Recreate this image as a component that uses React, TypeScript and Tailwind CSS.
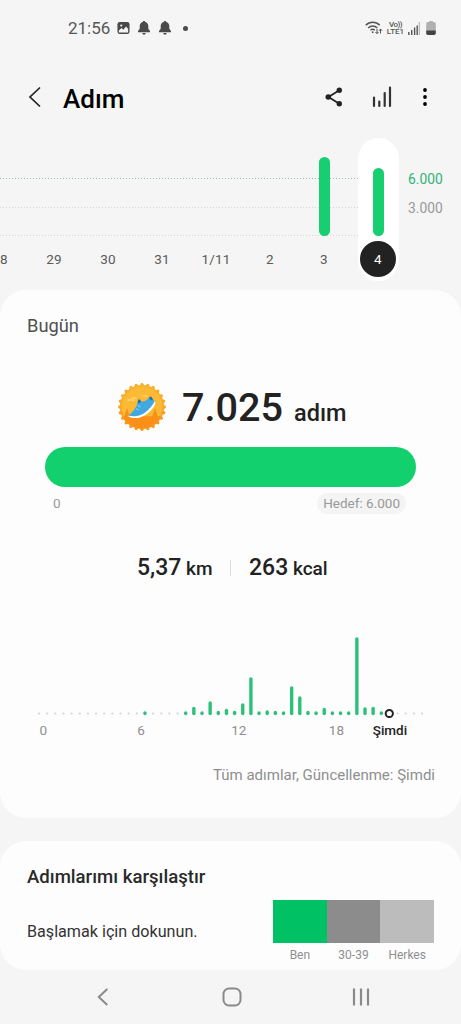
import clsx from "clsx";

type Day = {
  label: string;
  height?: number;
  selected?: boolean;
  edge?: boolean;
};

const days: Day[] = [
  { label: "8", edge: true },
  { label: "29" },
  { label: "30" },
  { label: "31" },
  { label: "1/11" },
  { label: "2" },
  { label: "3", height: 79 },
  { label: "4", height: 68, selected: true },
];

// half-hour slots of the day, 0 = no steps
const slots = [
  0, 0, 0, 0, 0, 0, 0, 0, 0, 0, 0, 0, 0, 4, 0, 0, 0, 0, 4, 8.5, 4, 14, 4.5, 6.5,
  4.5, 12, 38, 4, 5, 4.5, 4, 29, 19, 4.5, 4, 7.5, 4, 4, 4, 78, 8, 8.5, 4,
];
const SLOT_COUNT = 48;
const SLOT_WIDTH = 8.15;

const groups = [
  { label: "Ben", color: "bg-[#00c163]" },
  { label: "30-39", color: "bg-[#8c8c8c]" },
  { label: "Herkes", color: "bg-[#bcbcbc]" },
];

function BellIcon() {
  return (
    <svg width="12" height="14" viewBox="0 0 12 14" fill="#4a4a4a">
      <path d="M6 0c.8 0 1.200.5 1.200 1C9.200 1.500 10.300 3.200 10.300 5.200v2.600l1.700 2.200v1.200H0V10l1.700-2.200V5.200c0-2 1.100-3.700 3.100-4.200C4.800.5 5.200 0 6 0z" />
      <path d="M4.300 12h3.400a1.700 1.700 0 0 1-3.400 0z" />
    </svg>
  );
}

function StatusBar() {
  return (
    <div className="flex h-14 items-center justify-between pl-[68px] pr-[25px] text-[#555]">
      <div className="flex items-center">
        <span className="w-[49px] text-[17px] leading-none">21:56</span>
        <svg width="13" height="14" viewBox="0 0 14 14" className="mr-2">
          <rect x="0.500" y="0.500" width="13" height="13" rx="2.500" fill="#4a4a4a" />
          <circle cx="4.600" cy="4.300" r="1.200" fill="#f5f5f5" />
          <path d="M2 9.600 4.800 7l2 1.800 3-3.300L12 8v3.800H2z" fill="#f5f5f5" />
        </svg>
        <BellIcon />
        <span className="w-[9px]" />
        <BellIcon />
        <span className="ml-3 size-[5px] rounded-full bg-[#4a4a4a]" />
      </div>
      <div className="flex items-center">
        <svg width="18" height="14" viewBox="0 0 18 14" fill="none" stroke="#555" className="mr-1">
          <path d="M.8 4.300C4.500.2 11 .2 14.700 4.300" strokeWidth="1.500" />
          <path d="M3.200 7c2.600-2.700 6.500-2.700 9.100 0" strokeWidth="1.500" />
          <path d="M5.500 9.300c1.300-1.200 3-1.200 4.300 0" strokeWidth="1.400" />
          <circle cx="7.700" cy="11.200" r="0.900" fill="#555" stroke="none" />
          <path d="M12 8v4.500m-1.500-1.500 1.500 1.700 1.500-1.700M15.500 12.500V8M14 9.700 15.500 8 17 9.700" />
        </svg>
        <div className="mr-1 flex w-[17px] flex-col items-center text-[8px] font-medium leading-[7.500px]">
          <span className="tracking-[-0.500px]">Vo))</span>
          <span>LTE1</span>
        </div>
        <svg width="12" height="13" viewBox="0 0 12 13" strokeWidth="1.400" stroke="#555" className="mr-1.5">
          <path d="M.8 10v3M3.700 8v5M6.600 5.500V13M9.200 3.500V13" />
          <path d="M11.300 0v13" stroke="#aaa" strokeWidth="1" />
        </svg>
        <svg width="10" height="14" viewBox="0 0 10 14">
          <path d="M3 1a1 1 0 0 1 1-1h2a1 1 0 0 1 1 1h1a1.800 1.800 0 0 1 1.800 1.800V10H.2V2.800A1.800 1.800 0 0 1 2 1z" fill="#b0b0b0" />
          <path d="M.2 9.500h9.600v2.700A1.800 1.800 0 0 1 8 14H2a1.800 1.800 0 0 1-1.800-1.800z" fill="#444" />
        </svg>
      </div>
    </div>
  );
}

function Header() {
  return (
    <header className="flex h-[82px] items-center pl-7 pr-[33px]">
      <svg width="14" height="22" viewBox="0 0 14 22" fill="none" stroke="#222" strokeWidth="1.700" className="mr-[21px]">
        <path d="M12 1.500 2 11l10 9.500" />
      </svg>
      <h1 className="mt-[3px] flex-1 text-[26px] font-medium leading-none text-black">Adım</h1>
      <svg width="18" height="20" viewBox="0 0 18 20" fill="#222" className="mr-[29px]">
        <path d="M14.300 3.300 3.500 10l10.800 6.700" fill="none" stroke="#222" strokeWidth="1.800" />
        <circle cx="14.300" cy="3.300" r="2.700" />
        <circle cx="3.300" cy="10" r="2.800" />
        <circle cx="14.300" cy="16.700" r="2.700" />
      </svg>
      <svg width="20" height="22" viewBox="0 0 20 22" stroke="#333" strokeWidth="2.200" strokeLinecap="round" className="mr-[30px]">
        <path d="M2 11.500V20M7.300 15.500V20M12.700 7V20M18 1.500V20" />
      </svg>
      <svg width="6" height="20" viewBox="0 0 6 20">
        <circle cx="3" cy="3" r="1.900" />
        <circle cx="3" cy="10" r="1.900" />
        <circle cx="3" cy="17" r="1.900" />
      </svg>
    </header>
  );
}

function WeekChart() {
  return (
    <section className="relative h-[152px]">
      <svg className="absolute left-0 top-0" width="358" height="152" fill="none" strokeDasharray="1 2">
        <path d="M0 40.500H358" stroke="#a3bdb1" />
        <path d="M0 69.500H358" stroke="#d6d6d6" />
        <path d="M0 97.500H358" stroke="#d6d6d6" />
      </svg>
      <div className="relative flex">
        <div className="-ml-[27px] flex">
          {days.map((day) => (
            <div key={day.label} className="flex w-[54px] justify-center">
              <div
                className={clsx(
                  "flex h-[143px] w-[41px] flex-col items-center rounded-full",
                  day.selected && "bg-white"
                )}
              >
                <div className="flex h-[98px] items-end">
                  {day.height && (
                    <div className="w-[11px] rounded-full bg-[#17ce70]" style={{ height: day.height }} />
                  )}
                </div>
                <div
                  className={clsx(
                    "mt-[5px] flex size-9 items-center justify-center rounded-full pt-px text-[13.5px] leading-none tracking-[0.2px]",
                    day.selected ? "bg-[#222] text-white" : "text-[#5a5a5a]",
                    day.edge && "pl-2"
                  )}
                >
                  {day.label}
                </div>
              </div>
            </div>
          ))}
        </div>
        <div className="ml-[3px] mt-[27px] flex flex-col text-[13.8px] leading-[29px]">
          <span className="text-[#31b375]">6.000</span>
          <span className="text-[#999]">3.000</span>
        </div>
      </div>
    </section>
  );
}

function Medal() {
  return (
    <svg width="50" height="50" viewBox="-25 -25 50 50">
      <defs>
        <linearGradient id="medal" x1="0" y1="0" x2="0" y2="1">
          <stop offset="0" stopColor="#f9b430" />
          <stop offset="1" stopColor="#fb961c" />
        </linearGradient>
        <clipPath id="disc">
          <circle r="21" />
        </clipPath>
      </defs>
      {Array.from({ length: 24 }, (_, i) => (
        <path key={i} d="M-2.700-21-.700-24H.700L2.700-21z" fill={i > 6 && i < 18 ? "#fb971d" : "#f7ac2b"} transform={`rotate(${i * 15})`} />
      ))}
      <circle r="22" fill="url(#medal)" />
      <g clipPath="url(#disc)">
        <circle r="20.500" fill="#fbb934" />
        <path d="M-22 10.500C-10 8 8 10 22 9v16h-44z" fill="#fc8f18" />
        <path d="M-15 1l3 9h-6zM13 1l3 9h-6z" fill="#f39218" />
        <path d="M-14-7h6M-10-9h4M1-11h4" stroke="#fcd77c" strokeWidth="1.400" strokeLinecap="round" />
      </g>
      <path d="M-13.500 8.500C-7 9.500-1 8 3.500 4L12.500-6c1.500 1.200 1 4-1.500 7C5.500 8-1 11.500-8 11c-3.500-.2-6-1-5.500-2.500z" fill="#fff" />
      <path d="M-13.500 8.300C-9 5.500-5-.5-4-6c.5-1.800 2-1.700 2.500-.5C-.500-4.500 4.500-5.500 7-9.500c.8-1.200 2.500-1 3 .5l2.700 3.200C10.500-1.500 7 2.500 3.500 5.200-1.500 9-8 10.200-13.500 8.300z" fill="#41a8e0" />
      <path d="M-4-6c.5-1.800 2-1.700 2.500-.5l.2 1.700-3 1.300zM7-9.500c.8-1.200 2.500-1 3 .5l1 1.300-2 1.200z" fill="#226f9d" />
      <path d="M-4.500-1.500l3 1.500M-6 1.500l2.800 1.500" stroke="#9adcf5" strokeWidth="0.800" />
    </svg>
  );
}

function HourChart() {
  return (
    <div className="mt-[39px]">
      <svg width="461" height="96" className="block">
        {Array.from({ length: SLOT_COUNT }, (_, i) => {
          const x = 39 + i * SLOT_WIDTH;
          const value = slots[i];
          if (!value) return <circle key={i} cx={x} cy="91.500" r="1.100" fill="#d2d2d2" />;
          return (
            <rect key={i} x={x - 1.700} y={93.300 - value} width="3.400" height={value} rx="1.700" fill="#2cc07b" />
          );
        })}
        <circle cx="389.300" cy="91.500" r="3.600" fill="#fdfdfd" stroke="#222" strokeWidth="2" />
      </svg>
      <div className="-ml-[5.500px] mt-[2px] flex text-[13.5px] leading-[20px] text-[#8f8f8f]">
        <span className="w-[97.700px] text-center">0</span>
        <span className="w-[97.700px] text-center">6</span>
        <span className="w-[97.700px] text-center">12</span>
        <span className="w-[97.700px] text-center">18</span>
        <span className="w-[10px] whitespace-nowrap font-medium text-[#222]">
          <span className="-ml-[12.500px]">Şimdi</span>
        </span>
      </div>
    </div>
  );
}

function TodayCard() {
  return (
    <section className="flex h-[528px] flex-col rounded-[26px] bg-[#fdfdfd]">
      <h2 className="mt-[26px] pl-[27px] text-[18.300px] leading-5 text-[#505050]">Bugün</h2>
      <div className="mt-[41px] flex h-[60px] items-center pl-[117px]">
        <Medal />
        <p className="ml-[15px] mt-0.5 flex items-baseline text-[#222]">
          <span className="text-[39.600px] font-medium leading-[60px]">7.025</span>
          <span className="ml-[11px] text-[23.5px] font-medium">adım</span>
        </p>
      </div>
      <div className="ml-[45px] mt-[10px] h-10 w-[371px] rounded-full bg-[#12d06e]" />
      <div className="mt-1.5 flex items-center justify-between pl-[53px] pr-[55px] text-[13.5px] leading-[21px] text-[#999]">
        <span>0</span>
        <span className="rounded-full bg-[#f4f4f4] px-1.5">Hedef: 6.000</span>
      </div>
      <div className="mt-[39px] flex h-[30px] items-center pl-[137px] font-medium text-[#222]">
        <p className="w-[93px] whitespace-nowrap text-[23px] leading-[30px]">
          5,37 <span className="-ml-px text-[19px]">km</span>
        </p>
        <span className="h-4 w-px bg-[#dcdcdc]" />
        <p className="ml-[18px] whitespace-nowrap text-[23px] leading-[30px]">
          263 <span className="-ml-px text-[19px]">kcal</span>
        </p>
      </div>
      <HourChart />
      <p className="mt-[25px] pr-[26px] text-right text-[15px] leading-5 text-[#8f8f8f]">
        Tüm adımlar, Güncellenme: Şimdi
      </p>
    </section>
  );
}

function CompareCard() {
  return (
    <section className="mt-[23px] h-[129px] rounded-[26px] bg-[#fdfdfd] pl-[27px] pr-[27px] pt-[26px]">
      <h2 className="text-[18.600px] font-medium leading-5 text-[#2a2a2a]">Adımlarımı karşılaştır</h2>
      <div className="mt-[13px] flex justify-between">
        <p className="mt-[22px] text-[16.150px] leading-5 text-[#333]">Başlamak için dokunun.</p>
        <div className="flex">
          {groups.map((group) => (
            <div key={group.label} className="w-[53.670px] text-center">
              <div className={clsx("h-[43px]", group.color)} />
              <span className="mt-[3px] block text-xs leading-[18px] text-[#8f8f8f]">{group.label}</span>
            </div>
          ))}
        </div>
      </div>
    </section>
  );
}

function NavBar() {
  return (
    <nav className="flex h-[54px] items-center pl-[97px]">
      <svg width="12" height="18" viewBox="0 0 12 18" fill="none" stroke="#8a8a8a" strokeWidth="2">
        <path d="M10.300 1 1.800 9l8.500 8" />
      </svg>
      <svg width="20" height="20" viewBox="0 0 20 20" fill="none" stroke="#8a8a8a" strokeWidth="2" className="ml-[113px]">
        <rect x="1.500" y="1.500" width="17" height="17" rx="5.500" />
      </svg>
      <svg width="18" height="18" viewBox="0 0 18 18" stroke="#8a8a8a" strokeWidth="2.200" className="ml-[110px]">
        <path d="M2 .5v17M9 .5v17M16 .5v17" />
      </svg>
    </nav>
  );
}

export default function App() {
  return (
    <div className="h-[1024px] w-[461px] overflow-hidden bg-[#f5f5f5] font-['Roboto',sans-serif]">
      <StatusBar />
      <Header />
      <WeekChart />
      <TodayCard />
      <CompareCard />
      <NavBar />
    </div>
  );
}
